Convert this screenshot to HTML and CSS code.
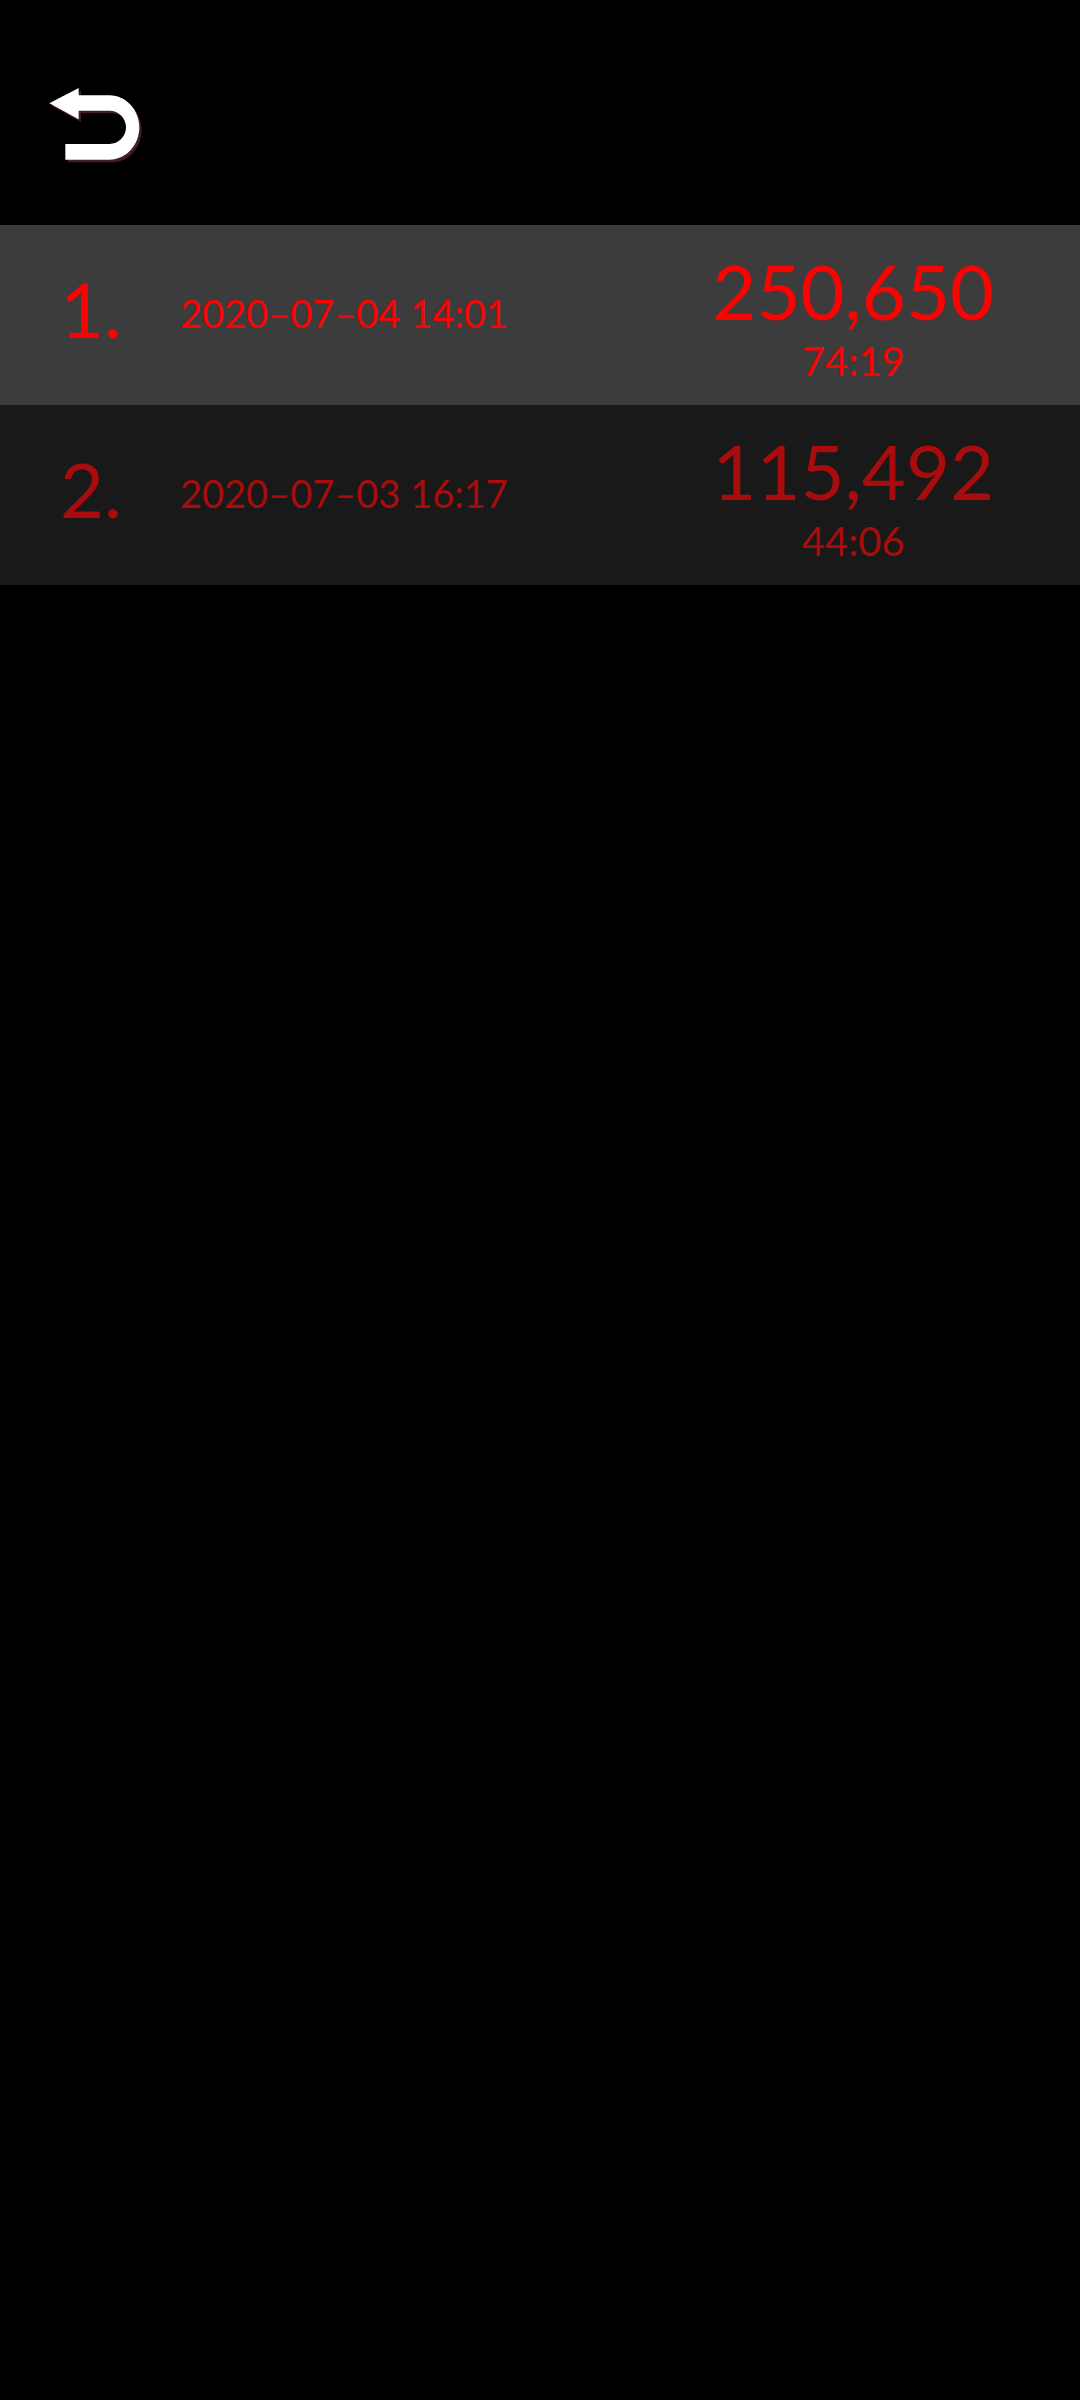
FILE: index.html
```
<!DOCTYPE html>
<html lang="en">
<head>
  <meta charset="UTF-8">
  <meta name="viewport" content="width=device-width, initial-scale=1.0">
  <title>High Scores</title>
  <link rel="stylesheet" href="styles.css">
</head>
<body>
  <header class="topbar">
    <button class="back" type="button" aria-label="Back">
      <svg class="back-icon" viewBox="0 0 390 330" aria-hidden="true">
        <path class="back-shadow" transform="translate(7 8)" d="M58 100L146 54V76H238C290 76 328 122 328 172C328 224 290 269 238 269H106V222H238C266 222 288 200 288 172C288 144 266 122 238 122H146V148Z"/>
        <path class="back-arrow" d="M58 100L146 54V76H238C290 76 328 122 328 172C328 224 290 269 238 269H106V222H238C266 222 288 200 288 172C288 144 266 122 238 122H146V148Z"/>
      </svg>
    </button>
  </header>
  <table class="scores">
    <tbody>
      <tr class="row best">
        <td class="rank">1.</td>
        <td class="date">2020–07–04 14:01</td>
        <td class="result">
          <div class="points">250,650</div>
          <div class="time">74:19</div>
        </td>
      </tr>
      <tr class="row">
        <td class="rank">2.</td>
        <td class="date">2020–07–03 16:17</td>
        <td class="result">
          <div class="points">115,492</div>
          <div class="time">44:06</div>
        </td>
      </tr>
    </tbody>
  </table>
</body>
</html>
```
FILE: styles.css
```
body {
  margin: 0;
  background-color: #000;
  font-family: Lato, sans-serif;
}
.topbar {
  display: flex;
  padding: 70px 30px 45px;
}
.back {
  padding: 0;
  border: none;
  background: none;
  cursor: pointer;
}
.back-icon {
  display: block;
  width: 130px;
  height: 110px;
}
.back-arrow {
  fill: #fff;
}
.back-shadow {
  fill: #421c2b;
}
.scores {
  width: 100%;
  table-layout: fixed;
  border-collapse: collapse;
}
.row {
  height: 180px;
  background-color: #191919;
  color: #a80c0c;
}
.best {
  background-color: #3c3c3c;
  color: #fa0303;
}
.row td {
  padding: 0 0 4px;
  vertical-align: middle;
}
.row .rank {
  width: 120px;
  padding: 0 0 12px 60px;
  font-size: 76px;
  line-height: 92px;
}
.date {
  font-size: 38px;
  line-height: 48px;
}
.row .result {
  width: 42%;
  padding: 0;
  text-align: center;
}
.points {
  font-size: 76px;
  line-height: 92px;
}
.time {
  font-size: 40px;
  line-height: 48px;
}
```
